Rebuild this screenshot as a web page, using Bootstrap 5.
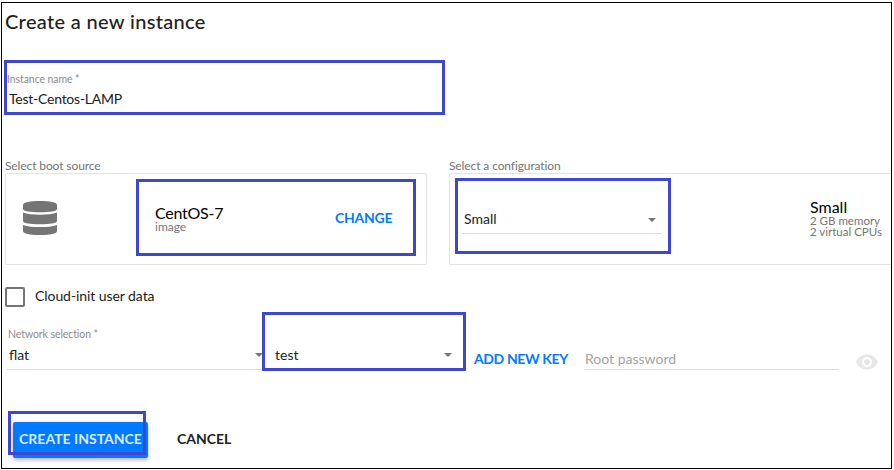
<!DOCTYPE html>
<html lang="en">
<head>
<meta charset="utf-8">
<meta name="viewport" content="width=device-width, initial-scale=1">
<title>Create a new instance</title>
<link href="https://cdn.jsdelivr.net/npm/bootstrap@5.3.0/dist/css/bootstrap.min.css" rel="stylesheet">
<style>
body{font-family:Lato,"Open Sans",sans-serif;font-size:14px;color:#212121;height:470px;overflow:hidden;background:#fff}
.panel{margin:2px 0 0 1px;width:891px;height:467px;border:1px solid #000;padding-left:3px}
h1{font-size:20px;line-height:24px;padding-top:6px;height:70px;letter-spacing:.33px;font-weight:500;color:#212121}
.tiny{font-size:10.5px;line-height:12px;color:#8c8c8c;letter-spacing:-.08px}
.val{line-height:20px}
.name-field{height:42px;width:440px;margin:0 0 44px 2px;border-bottom:1px solid #dcdcdc}
.name-field .val{padding:4px 0 0 2px;letter-spacing:-.24px}
.cap{font-size:12px;line-height:14px;color:#757575;letter-spacing:-.11px}
.box{height:92px;border:1px solid #e3e3e3;border-radius:2px}
.src{width:422px;margin-right:22px}
.db{width:36px;height:36px;margin:26px 97px 0 16px}
.src-text{width:180px;padding-top:31px}
.title{font-size:16px;line-height:16px;color:#000}
.src-text .title{letter-spacing:-.25px}
.sub{font-size:12px;line-height:12px;color:#757575}
.link{font-weight:700;color:#007bff;line-height:20px}
.change{padding-top:34px;letter-spacing:-.25px}
.conf-box{border-right:0;border-radius:2px 0 0 2px;padding-left:12px}
.conf-select{width:200px;height:60px;padding:35px 6px 0 2px;border-bottom:1px solid #dcdcdc;margin-right:148px}
.conf-text{padding-top:25px}
.conf-text .sub{font-size:11.5px;line-height:11px}
.caret{width:0;height:0;border:4px solid transparent;border-top-color:#757575;border-bottom:0;margin-top:9px}
.nets .caret{margin-top:8px}
.check-row{margin-top:22px;height:20px}
.check-box{width:20px;height:20px;border:2px solid #757575;border-radius:2px;margin-right:10px}
.check-row label{line-height:18px;letter-spacing:-.07px}
.net-label{margin:21px 0 0 3px}
.nets{height:30px;padding-left:2px}
.field{height:30px;padding:5px 0 0 2px;border-bottom:1px solid #dcdcdc}
.f-flat{width:256px;margin-right:10px}
.f-key{width:184px;margin-right:17px;padding-right:5px}
.nets .link{width:110px;padding-top:9px;letter-spacing:-.38px}
.f-root{width:255px;padding-top:8px;margin-right:16px;color:#a3a3a3}
.f-root .val{margin-left:-1px}
.eye{width:24px;height:24px;margin-top:10px}
.actions{margin-top:52px;padding-left:8px}
.create,.create:hover{width:135px;height:36px;background:#007bff;color:#dceaff;border-radius:2px;border:0;font-size:14px;font-weight:700;padding:0 0 2px 0;line-height:34px;box-shadow:0 2px 4px rgba(0,0,0,.3)}
.cancel{font-size:14px;font-weight:700;color:#212121;border:0;padding:0 0 2px;line-height:34px;margin-left:29px}
.hl{position:absolute;border:3px solid #3f48cc;pointer-events:none}
.hl-name{left:4px;top:60px;width:441px;height:55px}
.hl-src{left:136px;top:179px;width:280px;height:77px}
.hl-conf{left:455px;top:178px;width:216px;height:76px}
.hl-key{left:262px;top:312px;width:204px;height:59px}
.hl-create{left:8px;top:411px;width:138px;height:44px}
</style>
</head>
<body>
<main class="panel overflow-hidden">
  <h1 class="m-0">Create a new instance</h1>
  <div class="name-field">
    <div class="tiny">Instance name *</div>
    <div class="val">Test-Centos-LAMP</div>
  </div>
  <div class="d-flex">
    <section class="src flex-shrink-0">
      <div class="cap">Select boot source</div>
      <div class="box d-flex">
        <svg class="db flex-shrink-0" viewBox="0 0 36 36" fill="#757575"><path d="M1 5C1 2.200 8 1 18 1s17 1.200 17 4v4c0 2.300-7 3.300-17 3.300S1 11.300 1 9z"/><path d="M1 12.600c4 1.600 10 2.100 17 2.100s13-.5 17-2.100V21c0 2.300-7 3.300-17 3.300S1 23.300 1 21z"/><path d="M1 25c4 1.600 10 2.100 17 2.100S31 26.600 35 25v6c0 2.800-7 4-17 4S1 33.800 1 31z"/></svg>
        <div class="src-text"><div class="title">CentOS-7</div><div class="sub">image</div></div>
        <span class="link change">CHANGE</span>
      </div>
    </section>
    <section class="flex-grow-1">
      <div class="cap">Select a configuration</div>
      <div class="box conf-box d-flex">
        <div class="conf-select d-flex justify-content-between"><span class="val">Small</span><span class="caret"></span></div>
        <div class="conf-text"><div class="title">Small</div><div class="sub">2 GB memory</div><div class="sub">2 virtual CPUs</div></div>
      </div>
    </section>
  </div>
  <div class="check-row d-flex">
    <span class="check-box" role="checkbox" aria-checked="false"></span><label>Cloud-init user data</label>
  </div>
  <div class="tiny net-label">Network selection *</div>
  <div class="nets d-flex">
    <div class="field f-flat d-flex justify-content-between"><span class="val">flat</span><span class="caret"></span></div>
    <div class="field f-key d-flex justify-content-between"><span class="val">test</span><span class="caret"></span></div>
    <span class="link text-nowrap">ADD NEW KEY</span>
    <div class="field f-root"><span class="val">Root password</span></div>
    <svg class="eye" viewBox="0 0 24 24" fill="#e7e7e7"><path d="M12 4.500C7 4.500 2.730 7.610 1 12c1.730 4.390 6 7.500 11 7.500s9.270-3.110 11-7.500c-1.730-4.390-6-7.500-11-7.500zM12 17c-2.760 0-5-2.240-5-5s2.240-5 5-5 5 2.240 5 5-2.240 5-5 5zm0-8c-1.660 0-3 1.340-3 3s1.340 3 3 3 3-1.340 3-3-1.340-3-3-3z"/></svg>
  </div>
  <div class="actions d-flex">
    <button class="btn create">CREATE INSTANCE</button>
    <button class="btn cancel">CANCEL</button>
  </div>
</main>
<div class="hl hl-name"></div>
<div class="hl hl-src"></div>
<div class="hl hl-conf"></div>
<div class="hl hl-key"></div>
<div class="hl hl-create"></div>
</body>
</html>
